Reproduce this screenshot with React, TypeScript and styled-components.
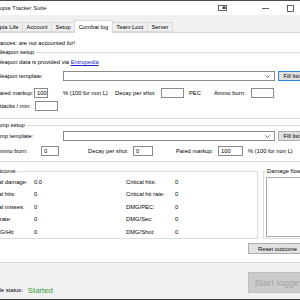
import styled, { createGlobalStyle } from 'styled-components';

const GlobalStyle = createGlobalStyle`
  html, body {
    margin: 0;
    padding: 0;
    background: #ffffff;
  }
  body {
    font-family: "Liberation Sans", Arial, sans-serif;
  }
`;

const Viewport = styled.div`
  width: 300px;
  height: 300px;
  overflow: hidden;
`;

// the window is wider than the capture: its left and right edges fall outside the crop
const Window = styled.div`
  width: 348px;
  height: 300px;
  margin-left: -20px;
  box-sizing: border-box;
  display: flex;
  flex-direction: column;
  border-top: 1px solid #4b4b4b;
  border-bottom: 1px solid #3c3c3c;
  background: #f0f0f0;
  font-size: 5.8px;
  color: #000;
`;

const TitleBar = styled.div`
  height: 14px;
  flex: none;
  display: flex;
  align-items: center;
  padding-left: 9px;
  background: #ffffff;
`;

const Title = styled.span`
  color: #1a1a1a;
  white-space: nowrap;
`;

const Caption = styled.div`
  margin-left: auto;
  display: flex;
  height: 100%;
`;

const CaptionButton = styled.div<{ $gap?: number }>`
  width: 25px;
  height: 100%;
  margin-left: ${(p) => p.$gap ?? 0}px;
  display: flex;
  align-items: center;
  justify-content: center;
`;

const TabStrip = styled.div`
  height: 17px;
  flex: none;
  box-sizing: border-box;
  display: flex;
  align-items: flex-end;
  padding-left: 1.5px;
  background: #f0f0f0;
`;

const Tab = styled.div<{ $active?: boolean }>`
  position: relative;
  box-sizing: border-box;
  height: ${(p) => (p.$active ? 13 : 10)}px;
  margin-right: -1px;
  margin-bottom: ${(p) => (p.$active ? -1 : 0)}px;
  padding: 0 3.5px;
  display: flex;
  align-items: center;
  white-space: nowrap;
  border: 1px solid #d9d9d9;
  border-bottom: ${(p) => (p.$active ? 'none' : '1px solid #d9d9d9')};
  background: ${(p) => (p.$active ? '#ffffff' : '#f0f0f0')};
  z-index: ${(p) => (p.$active ? 1 : 0)};
`;

const TabPage = styled.div`
  height: 231px;
  flex: none;
  box-sizing: border-box;
  display: flex;
  flex-direction: column;
  padding: 5px 20px 0 8px;
  border: 1px solid #d9d9d9;
  background: #ffffff;
`;

const Notice = styled.div`
  height: 10px;
  display: flex;
  align-items: center;
  padding-left: 1px;
  white-space: nowrap;
`;

const GroupBox = styled.fieldset<{ $mt?: number; $pt?: number; $pb?: number; $pl?: number }>`
  margin: ${(p) => p.$mt ?? 0}px 0 0 0;
  min-width: 0;
  padding: ${(p) => p.$pt ?? 0}px 1px ${(p) => p.$pb ?? 0}px ${(p) => p.$pl ?? 6}px;
  border: 1px solid #dcdcdc;
  display: flex;
  flex-direction: column;
`;

const Legend = styled.legend`
  padding: 0 1px;
  line-height: 8px;
  font-size: 5.8px;
  white-space: nowrap;
`;

const Row = styled.div<{ $mt?: number }>`
  height: 10px;
  flex: none;
  margin-top: ${(p) => p.$mt ?? 0}px;
  display: flex;
  align-items: center;
  white-space: nowrap;
`;

const Label = styled.span<{ $w?: number; $ml?: number }>`
  flex: none;
  width: ${(p) => (p.$w ? `${p.$w}px` : 'auto')};
  margin-left: ${(p) => p.$ml ?? 0}px;
  white-space: nowrap;
`;

const Link = styled.span`
  color: #2323c8;
  text-decoration: underline;
`;

const Field = styled.input<{ $w: number }>`
  flex: none;
  width: ${(p) => p.$w}px;
  height: 10px;
  box-sizing: border-box;
  margin: 0;
  padding: 0 0 0 2px;
  border: 1px solid #8a8a8a;
  background: #ffffff;
  font-family: inherit;
  font-size: 5.8px;
  color: #000;
  outline: none;
`;

const Combo = styled.div`
  flex: 1;
  height: 10px;
  box-sizing: border-box;
  display: flex;
  align-items: center;
  justify-content: flex-end;
  padding-right: 4px;
  border: 1px solid #8a8a8a;
  background: #ffffff;
`;

const WinButton = styled.div<{ $w: number; $h?: number; $focused?: boolean }>`
  flex: none;
  width: ${(p) => p.$w}px;
  height: ${(p) => p.$h ?? 10}px;
  box-sizing: border-box;
  margin-left: 3px;
  display: flex;
  align-items: center;
  justify-content: center;
  white-space: nowrap;
  background: #e1e1e1;
  border: 1px solid ${(p) => (p.$focused ? '#2b84d6' : '#adadad')};
`;

const OutcomeRow = styled.div`
  display: flex;
  gap: 5px;
  margin-top: 5px;
`;

const Outcome = styled(GroupBox)`
  flex: 0 0 269px;
  box-sizing: border-box;
`;

const DamageFlow = styled(GroupBox)`
  flex: 1;
`;

const Stats = styled.div`
  display: grid;
  grid-template-columns: 43px 92px 49px 1fr;
  grid-auto-rows: 12.5px;
  align-items: center;
  white-space: nowrap;
`;

const Chart = styled.div`
  height: 58px;
  margin-top: 2px;
  border: 1px solid #a9a9a9;
  background: #ffffff;
`;

const ResetRow = styled.div`
  display: flex;
  justify-content: flex-end;
  margin-top: 4px;
`;

const BottomBar = styled.div`
  height: 36px;
  flex: none;
  box-sizing: border-box;
  display: flex;
  align-items: flex-end;
  justify-content: space-between;
  padding: 9px 15px 4px 7px;
  background: #f0f0f0;
`;

const Status = styled.div`
  height: 10px;
  display: flex;
  align-items: center;
  gap: 5px;
  white-space: nowrap;
`;

const Started = styled.span`
  color: #3c9b3c;
  font-size: 7.8px;
`;

const StartButton = styled.div`
  width: 65px;
  height: 21px;
  margin-bottom: 2px;
  box-sizing: border-box;
  display: flex;
  align-items: center;
  justify-content: center;
  white-space: nowrap;
  background: #cccccc;
  border: 1px solid #bfbfbf;
  color: #a2a2a2;
  font-size: 9.3px;
`;

function Chevron() {
  return (
    <svg width="5" height="3" viewBox="0 0 5 3">
      <polyline points="0.3,0.3 2.5,2.5 4.7,0.3" fill="none" stroke="#404040" strokeWidth="0.7" />
    </svg>
  );
}

const weaponStats = [
  ['Total damage:', '0.0', 'Critical hits:', '0'],
  ['Total hits:', '0', 'Critical hit rate:', '0'],
  ['Total misses:', '0', 'DMG/PEC:', '0'],
  ['Hit rate:', '0', 'DMG/Sec:', '0'],
  ['DMG/Hit:', '0', 'DMG/Shot:', '0'],
];

export default function App() {
  return (
    <Viewport>
      <GlobalStyle />
      <Window>
        <TitleBar>
          <Title>Entropia Tracker Suite</Title>
          <Caption>
            <CaptionButton>
              <svg width="9" height="6" viewBox="0 0 9 6">
                <rect x="0.5" y="0.5" width="8" height="5" fill="none" stroke="#3a3a3a" strokeWidth="0.8" />
                <rect x="4.5" y="1.5" width="3" height="2.5" fill="#3a3a3a" />
              </svg>
            </CaptionButton>
            <CaptionButton $gap={18}>
              <svg width="7" height="1" viewBox="0 0 7 1">
                <rect x="0" y="0" width="7" height="0.8" fill="#3a3a3a" />
              </svg>
            </CaptionButton>
            <CaptionButton>
              <svg width="7" height="7" viewBox="0 0 7 7">
                <rect x="0.5" y="0.5" width="6" height="6" fill="none" stroke="#3a3a3a" strokeWidth="0.8" />
              </svg>
            </CaptionButton>
            <CaptionButton>
              <svg width="7" height="7" viewBox="0 0 7 7">
                <path d="M0.5 0.5 L6.5 6.5 M6.5 0.5 L0.5 6.5" stroke="#3a3a3a" strokeWidth="0.8" />
              </svg>
            </CaptionButton>
          </Caption>
        </TitleBar>

        <TabStrip>
          <Tab>Entropia Life</Tab>
          <Tab>Account</Tab>
          <Tab>Setup</Tab>
          <Tab $active>Combat log</Tab>
          <Tab>Team Loot</Tab>
          <Tab>Server</Tab>
        </TabStrip>

        <TabPage>
          <Notice>Advances: are not accounted for!</Notice>

          <GroupBox $pt={1} $pb={7}>
            <Legend>Weapon setup</Legend>
            <Row>
              <Label>
                Weapon data is provided via <Link>Entropedia</Link>
              </Label>
            </Row>
            <Row $mt={4}>
              <Label $w={67}>Weapon template:</Label>
              <Combo>
                <Chevron />
              </Combo>
              <WinButton $w={27} $focused>Fill list</WinButton>
            </Row>
            <Row $mt={7}>
              <Label $w={38}>Paied markup:</Label>
              <Field $w={14} readOnly value="100" />
              <Label $w={52} $ml={15}>% (100 for non L)</Label>
              <Label $w={46}>Decay per shot:</Label>
              <Field $w={23} readOnly value="" />
              <Label $w={25} $ml={5}>PEC</Label>
              <Label $w={37}>Ammo burn:</Label>
              <Field $w={23} readOnly value="" />
            </Row>
            <Row $mt={3}>
              <Label $w={39}>Attacks / min:</Label>
              <Field $w={23} readOnly value="" />
            </Row>
          </GroupBox>

          <GroupBox $mt={2} $pt={2} $pb={5}>
            <Legend>Amp setup</Legend>
            <Row>
              <Label $w={67}>Amp template:</Label>
              <Combo>
                <Chevron />
              </Combo>
              <WinButton $w={27}>Fill list</WinButton>
            </Row>
            <Row $mt={5}>
              <Label $w={45}>Ammo burn:</Label>
              <Field $w={18} readOnly value="0" />
              <Label $w={45} $ml={29}>Decay per shot</Label>
              <Field $w={20} readOnly value="0" />
              <Label $w={42} $ml={23}>Paied markup:</Label>
              <Field $w={25} readOnly value="100" />
              <Label $ml={5}>% (100 for non L)</Label>
            </Row>
          </GroupBox>

          <OutcomeRow>
            <Outcome $pl={1} $pt={0.5}>
              <Legend>Outcome</Legend>
              <Stats>
                {weaponStats.map((r) => r.map((cell, i) => <span key={r[0] + i}>{cell}</span>))}
              </Stats>
            </Outcome>
            <DamageFlow $pl={2}>
              <Legend>Damage flow</Legend>
              <Chart />
            </DamageFlow>
          </OutcomeRow>

          <ResetRow>
            <WinButton $w={59} $h={11}>Reset outcome</WinButton>
          </ResetRow>
        </TabPage>

        <BottomBar>
          <Status>
            <span>Logfile status:</span>
            <Started>Started</Started>
          </Status>
          <StartButton>Start logging</StartButton>
        </BottomBar>
      </Window>
    </Viewport>
  );
}
